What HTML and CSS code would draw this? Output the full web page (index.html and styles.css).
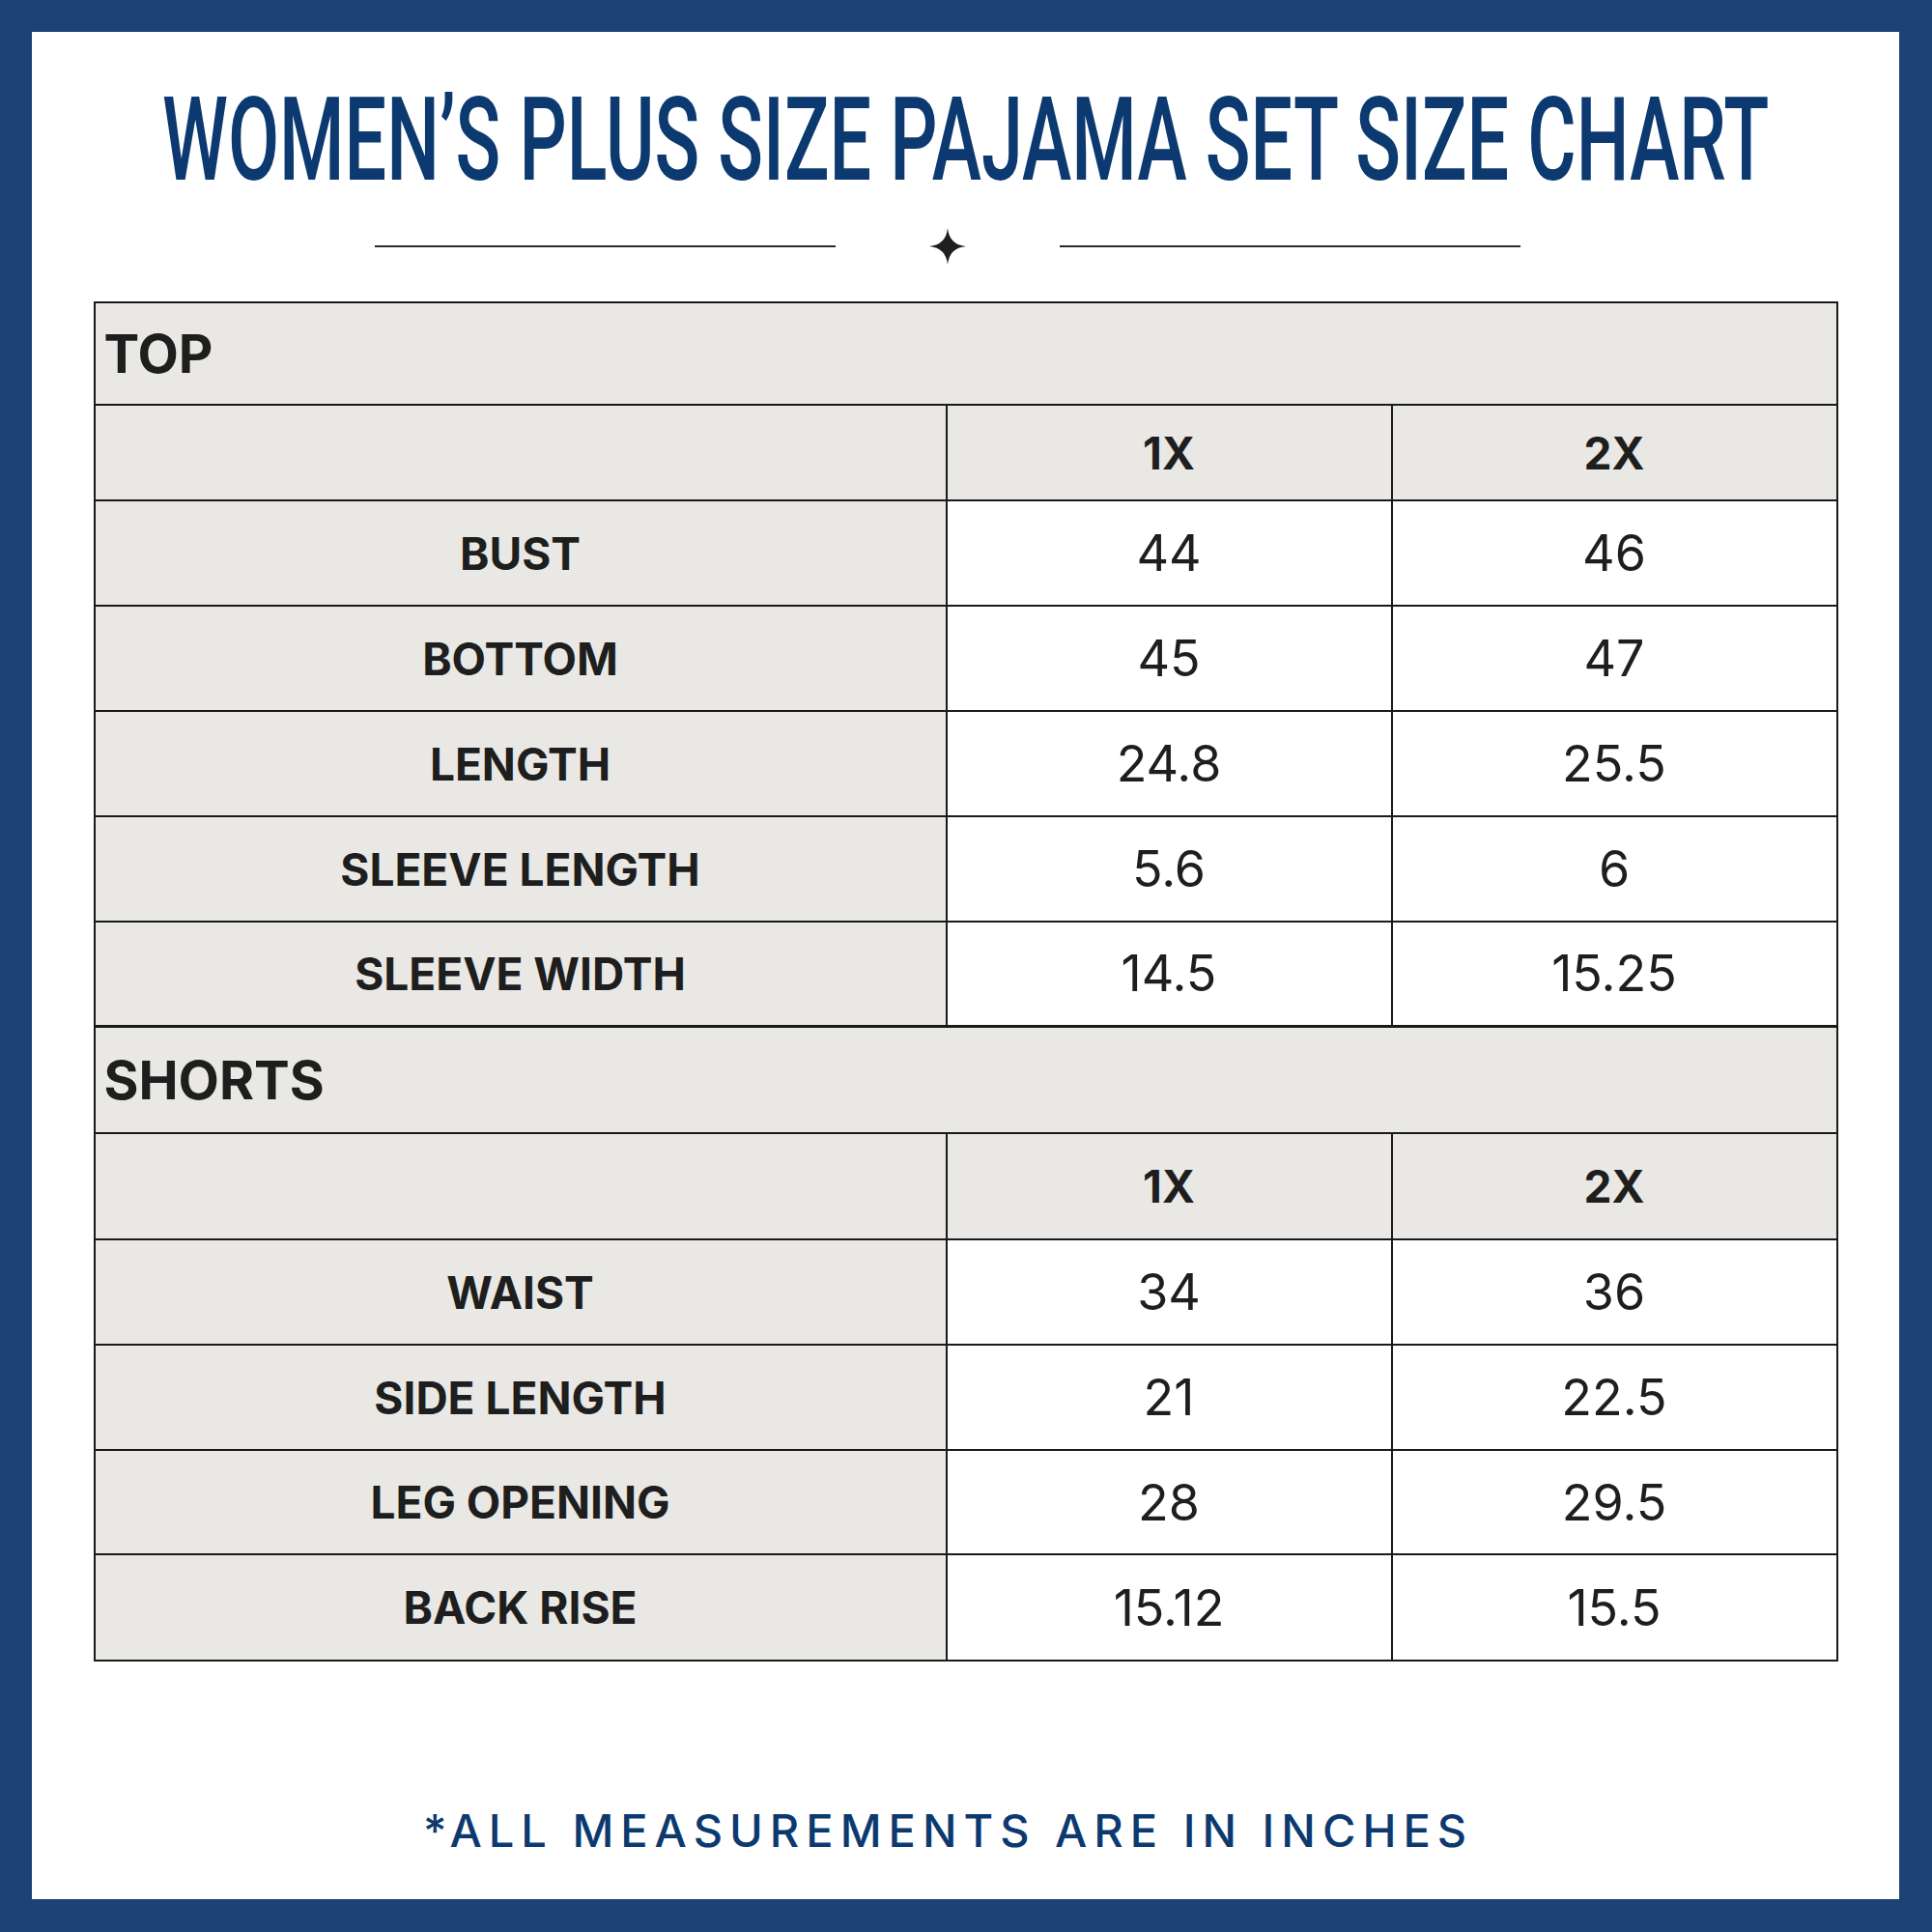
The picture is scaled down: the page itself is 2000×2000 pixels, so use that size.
FILE: index.html
```html
<!DOCTYPE html>
<html lang="en">
<head>
<meta charset="utf-8">
<title>Women's Plus Size Pajama Set Size Chart</title>
<link rel="stylesheet" href="styles.css">
</head>
<body>
<div class="frame">
  <header class="heading">
    <h1 class="title"><span class="title-text">WOMEN’S PLUS SIZE PAJAMA SET SIZE CHART</span></h1>
    <div class="divider">
      <span class="rule"></span>
      <svg class="star" viewBox="0 0 36 36" width="38" height="38" aria-hidden="true">
        <path d="M18 0 Q19.6 16.4 36 18 Q19.6 19.6 18 36 Q16.4 19.6 0 18 Q16.4 16.4 18 0 Z" fill="#1f1f1f"/>
      </svg>
      <span class="rule"></span>
    </div>
  </header>

  <table class="chart">
    <colgroup>
      <col class="c-label">
      <col class="c-size">
      <col class="c-size">
    </colgroup>
    <tbody>
      <tr class="r-section"><th colspan="3" class="section">TOP</th></tr>
      <tr class="r-head"><th class="label"></th><th class="size">1X</th><th class="size">2X</th></tr>
      <tr class="r-data"><th class="label">BUST</th><td>44</td><td>46</td></tr>
      <tr class="r-data"><th class="label">BOTTOM</th><td>45</td><td>47</td></tr>
      <tr class="r-data"><th class="label">LENGTH</th><td>24.8</td><td>25.5</td></tr>
      <tr class="r-data"><th class="label">SLEEVE LENGTH</th><td>5.6</td><td>6</td></tr>
      <tr class="r-data r-last"><th class="label">SLEEVE WIDTH</th><td>14.5</td><td>15.25</td></tr>
      <tr class="r-section r-section2"><th colspan="3" class="section">SHORTS</th></tr>
      <tr class="r-head r-head2"><th class="label"></th><th class="size">1X</th><th class="size">2X</th></tr>
      <tr class="r-data"><th class="label">WAIST</th><td>34</td><td>36</td></tr>
      <tr class="r-data"><th class="label">SIDE LENGTH</th><td>21</td><td>22.5</td></tr>
      <tr class="r-data r-short"><th class="label">LEG OPENING</th><td>28</td><td>29.5</td></tr>
      <tr class="r-data r-end"><th class="label">BACK RISE</th><td>15.12</td><td>15.5</td></tr>
    </tbody>
  </table>

  <p class="note">*ALL MEASUREMENTS ARE IN INCHES</p>
</div>
</body>
</html>
```

FILE: styles.css
```css
html, body {
  margin: 0;
  padding: 0;
  background: #1c4276;
}

.frame {
  box-sizing: border-box;
  width: 2000px;
  height: 2000px;
  border: 34px solid #1c4276;
  border-left-width: 33px;
  border-top-width: 33px;
  background: #ffffff;
  display: flex;
  flex-direction: column;
  align-items: center;
}

.heading {
  width: 100%;
  display: flex;
  flex-direction: column;
  align-items: center;
}

.title {
  margin: 0;
  padding-top: 52px;
  height: 124px;
  width: 100%;
  display: flex;
  justify-content: center;
  font-family: Roboto, "Liberation Sans", sans-serif;
  font-weight: 500;
  font-size: 121px;
  line-height: 121px;
  color: #0c3a70;
  white-space: nowrap;
}

.title-text {
  display: inline-block;
  transform: scaleX(0.638);
  transform-origin: center;
}

.divider {
  margin-top: 27px;
  height: 38px;
  display: flex;
  align-items: center;
  gap: 97px;
  margin-left: -37px;
}

.rule {
  display: block;
  width: 477px;
  height: 1.5px;
  background: #2a2a2a;
}

.star {
  display: block;
}

.chart {
  margin-top: 38px;
  width: 1804px;
  border-collapse: collapse;
  table-layout: fixed;
  border: 2px solid #141414;
  font-family: Inter, "Liberation Sans", sans-serif;
  color: #1e1e1e;
}

.c-label { width: 882px; }
.c-size { width: 461px; }

.chart th, .chart td {
  border: 2px solid #1a1a1a;
  padding: 0;
  text-align: center;
  vertical-align: middle;
}

.chart th {
  background: #e9e8e4;
  font-weight: 700;
}

.chart td {
  background: #ffffff;
  font-weight: 400;
  font-size: 52px;
}

.r-section { height: 106px; }
.r-section2 { height: 111px; }
.r-head { height: 99px; }
.r-head2 { height: 110px; }
.r-data { height: 109px; }
.r-last { height: 108px; }
.r-short { height: 108px; }
.r-end { height: 110px; }

.r-last th, .r-last td { border-bottom-width: 3px; }

.section {
  text-align: left !important;
  padding-left: 9px !important;
  font-size: 55px;
}

.label, .size {
  font-size: 46px;
}

.note {
  margin: 0;
  margin-top: 146px;
  margin-left: -36px;
  font-family: Inter, "Liberation Sans", sans-serif;
  font-size: 47px;
  font-weight: 500;
  letter-spacing: 7px;
  color: #0c3a70;
  white-space: nowrap;
}
```
